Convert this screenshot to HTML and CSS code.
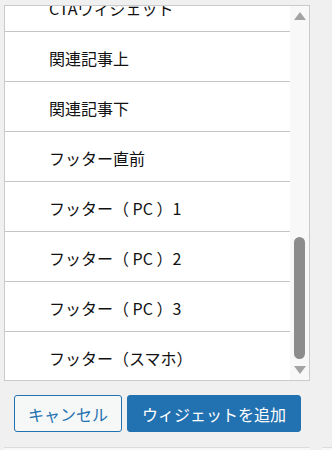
FILE: index.html
```html
<!DOCTYPE html>
<html lang="ja">
  <head>
    <meta charset="utf-8">
    <link rel="stylesheet" href="styles.css">
  </head>
  <body>
    <div class="picker">
      <div class="picker-view">
        <ul class="area-list">
          <li class="area">CTAウィジェット</li>
          <li class="area">関連記事上</li>
          <li class="area">関連記事下</li>
          <li class="area">フッター直前</li>
          <li class="area">フッター（ PC ）1</li>
          <li class="area">フッター（ PC ）2</li>
          <li class="area">フッター（ PC ）3</li>
          <li class="area">フッター（スマホ）</li>
        </ul>
      </div>
      <div class="scrollbar">
        <div class="arrow up"></div>
        <div class="track"><div class="thumb"></div></div>
        <div class="arrow down"></div>
      </div>
    </div>
    <div class="actions">
      <button class="btn btn-secondary">キャンセル</button>
      <button class="btn btn-primary">ウィジェットを追加</button>
    </div>
    <div class="next-row">
      <div class="next-box"></div>
      <div class="next-box side"></div>
    </div>
  </body>
</html>
```

FILE: styles.css
```css
body {margin: 0; background-color: #f0f0f1; font-family: "Noto Sans CJK JP", "Noto Sans", sans-serif; color: #1d2327}

.picker {display: flex; margin: 5px 0 0 4px; width: 306px; height: 376px; box-sizing: border-box; border: 1px solid #c9cacc; background: #fff}
.picker-view {flex: 1; overflow: hidden}
.area-list {list-style: none; margin: -24px 0 0 0; padding: 0}
.area {display: flex; align-items: center; height: 50px; box-sizing: border-box; padding: 2px 0 0 44px; border-bottom: 1px solid #c3c4c7; font-size: 16px; line-height: 1; color: #111; white-space: pre}

.scrollbar {width: 19px; display: flex; flex-direction: column; align-items: center; background: #f8f8f8}
.arrow {width: 0; height: 0; border-left: 6.5px solid transparent; border-right: 6.5px solid transparent}
.arrow.up {margin-top: 6px; border-bottom: 8px solid #a3a3a3}
.arrow.down {margin-bottom: 6px; border-top: 8px solid #a3a3a3}
.track {flex: 1; width: 100%; display: flex; flex-direction: column; justify-content: flex-end; align-items: center; padding-bottom: 7px}
.thumb {width: 11px; height: 122px; border-radius: 6px; background: #8c8c8c}

.actions {display: flex; gap: 5px; padding: 14px 0 0 14px}
.btn {height: 37px; box-sizing: border-box; border-radius: 3px; font-family: inherit; font-size: 16px; line-height: 1; padding: 0 13px; white-space: nowrap; cursor: pointer}
.btn-secondary {border: 1px solid #2271b1; background: #f6f7f7; color: #2271b1}
.btn-primary {border: 1px solid #2271b1; background: #2271b1; color: #fff; padding: 0 14px}

.next-row {display: flex; gap: 12px; margin: 15px 0 0 4px}
.next-box {width: 306px; height: 10px; background: #f6f7f7; border-top: 1px solid #dcdcde}
.next-box.side {flex: 1}
```
